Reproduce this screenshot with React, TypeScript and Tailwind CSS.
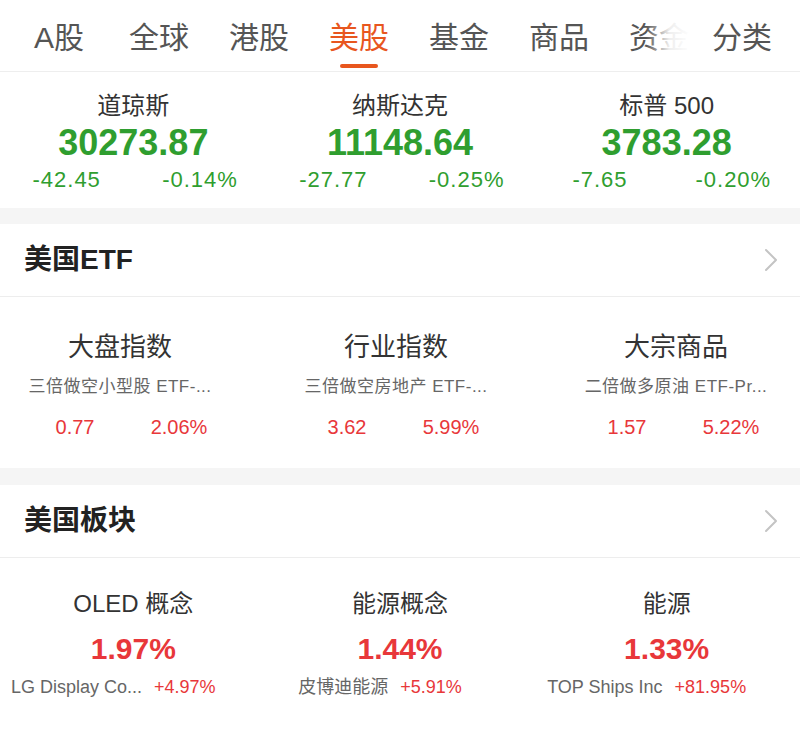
const font = { fontFamily: '"Liberation Sans", "Noto Sans CJK SC", sans-serif' };

const tabs = ["A股", "全球", "港股", "美股", "基金", "商品", "资金"];

const indices = [
  { name: "道琼斯", value: "30273.87", chg: "-42.45", pct: "-0.14%" },
  { name: "纳斯达克", value: "11148.64", chg: "-27.77", pct: "-0.25%" },
  { name: "标普 500", value: "3783.28", chg: "-7.65", pct: "-0.20%" },
];

const etfs = [
  { name: "大盘指数", sub: "三倍做空小型股 ETF-...", price: "0.77", pct: "2.06%", shift: "ml-[14px]" },
  { name: "行业指数", sub: "三倍做空房地产 ETF-...", price: "3.62", pct: "5.99%", shift: "ml-[6px]" },
  { name: "大宗商品", sub: "二倍做多原油 ETF-Pr...", price: "1.57", pct: "5.22%", shift: "ml-[6px]" },
];

const sectors = [
  { name: "OLED 概念", pct: "1.97%", stock: "LG Display Co...", stockPct: "+4.97%" },
  { name: "能源概念", pct: "1.44%", stock: "皮博迪能源", stockPct: "+5.91%" },
  { name: "能源", pct: "1.33%", stock: "TOP Ships Inc", stockPct: "+81.95%" },
];

function Chevron() {
  return (
    <svg width="14" height="24" viewBox="0 0 14 24" fill="none">
      <polyline points="2,2 12,12 2,22" stroke="#c4c4c4" strokeWidth="2" strokeLinejoin="round" strokeLinecap="round" />
    </svg>
  );
}

function SectionHeader({ title }: { title: string }) {
  return (
    <div className="h-[73px] flex items-center justify-between pl-[24px] pr-[22px] border-b border-[#ededed]">
      <span className="text-[28px] font-semibold text-[#222]">{title}</span>
      <Chevron />
    </div>
  );
}

export default function App() {
  return (
    <div className="w-[800px] h-[731px] bg-white overflow-hidden" style={font}>
      {/* Tabs */}
      <div className="h-[72px] flex border-b border-[#eeeeee]">
        <div className="relative w-[692px] overflow-hidden flex pl-[9px]">
          {tabs.map((t) => {
            const active = t === "美股";
            return (
              <div key={t} className="w-[100px] shrink-0 flex flex-col items-center pt-[19px]">
                <span className={`text-[30px] leading-[38px] ${active ? "text-[#e8561e]" : "text-[#555]"}`}>{t}</span>
                {active && <div className="mt-[7px] h-[4px] w-[38px] rounded-full bg-[#e8561e]" />}
              </div>
            );
          })}
          <div className="absolute right-0 top-0 h-full w-[46px] bg-gradient-to-r from-white/0 via-white/90 to-white" />
        </div>
        <div className="w-[100px] flex justify-center pt-[19px]">
          <span className="text-[30px] leading-[38px] text-[#555]">分类</span>
        </div>
      </div>

      {/* Indices */}
      <div className="h-[136px] grid grid-cols-3 pt-[19px]">
        {indices.map((i) => (
          <div key={i.name} className="flex flex-col items-center">
            <span className="text-[24px] leading-[30px] text-[#333]">{i.name}</span>
            <span className="mt-[2px] text-[36px] leading-[40px] font-bold text-[#2f9e2f]">{i.value}</span>
            <div className="mt-[4px] w-full grid grid-cols-2 text-center text-[22px] leading-[26px] text-[#2f9e2f] tracking-[1px]">
              <span>{i.chg}</span>
              <span>{i.pct}</span>
            </div>
          </div>
        ))}
      </div>

      <div className="h-[16px] bg-[#f5f5f5]" />

      {/* US ETF */}
      <SectionHeader title="美国ETF" />
      <div className="h-[171px] grid grid-cols-[240px_312px_248px] pt-[34px]">
        {etfs.map((e) => (
          <div key={e.name} className="flex flex-col items-center">
            <span className="text-[26px] leading-[32px] text-[#333]">{e.name}</span>
            <span className="mt-[12px] text-[17px] leading-[24px] text-[#666] whitespace-nowrap tracking-[0.5px]">{e.sub}</span>
            <div className={`mt-[16px] w-[208px] grid grid-cols-2 text-center text-[20px] leading-[24px] text-[#e8373a] ${e.shift}`}>
              <span>{e.price}</span>
              <span>{e.pct}</span>
            </div>
          </div>
        ))}
      </div>

      <div className="h-[17px] bg-[#f5f5f5]" />

      {/* US sectors */}
      <SectionHeader title="美国板块" />
      <div className="grid grid-cols-3 pt-[31px]">
        {sectors.map((s) => (
          <div key={s.name} className="flex flex-col items-center">
            <span className="text-[24px] leading-[30px] text-[#333]">{s.name}</span>
            <span className="mt-[12px] text-[30px] leading-[36px] font-bold text-[#e8373a]">{s.pct}</span>
            <div className="mt-[8px] flex justify-center gap-[12px] pr-[40px] whitespace-nowrap text-[18px] leading-[24px]">
              <span className="text-[#666]">{s.stock}</span>
              <span className="text-[#e8373a]">{s.stockPct}</span>
            </div>
          </div>
        ))}
      </div>
    </div>
  );
}
